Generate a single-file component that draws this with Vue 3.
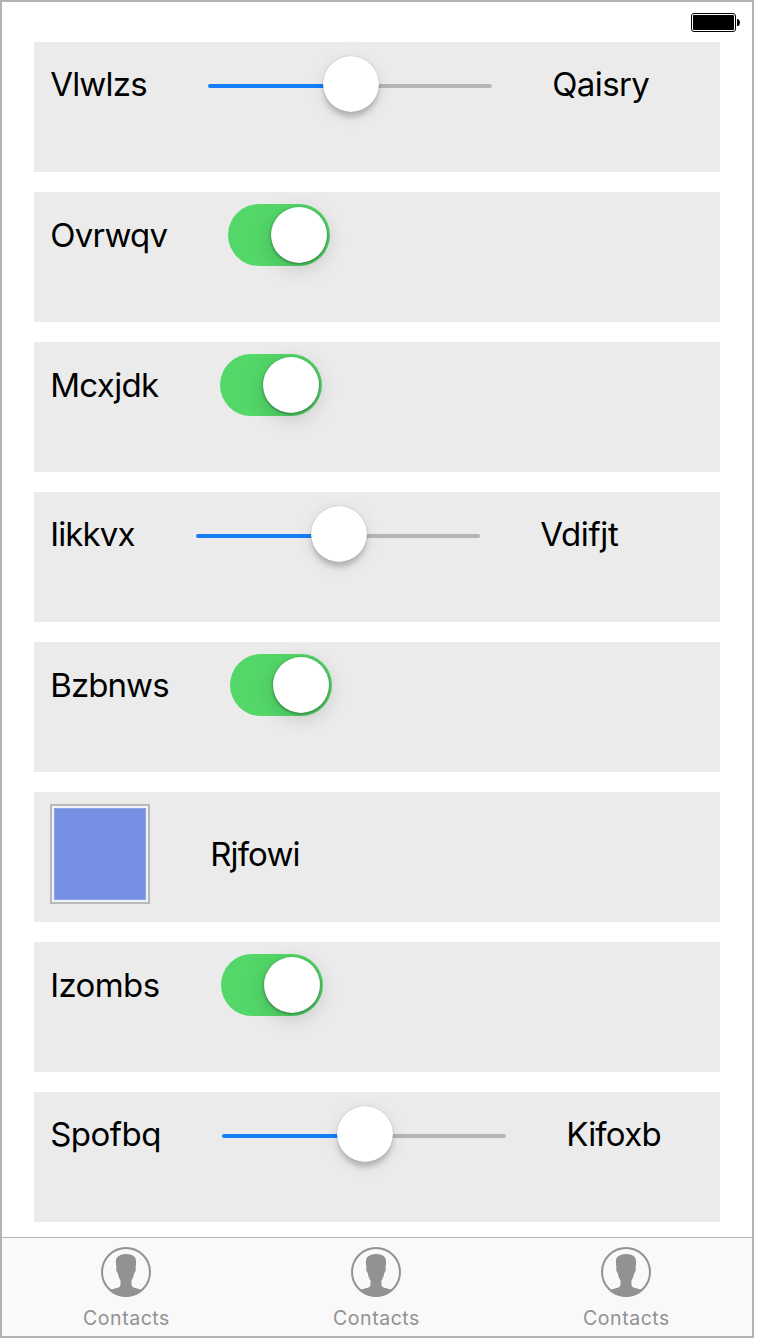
<script setup>
const rows = [
  { type: 'slider', label: 'Vlwlzs', width: 98, spacing: -0.8, end: 'Qaisry', endSpacing: -0.6 },
  { type: 'switch', label: 'Ovrwqv', width: 118, spacing: -0.75 },
  { type: 'switch', label: 'Mcxjdk', width: 110, spacing: -0.65 },
  { type: 'slider', label: 'Iikkvx', width: 86, spacing: -0.85, end: 'Vdifjt', endSpacing: -0.35 },
  { type: 'switch', label: 'Bzbnws', width: 120, spacing: -0.9 },
  { type: 'image', label: 'Rjfowi', width: 92, spacing: -0.85 },
  { type: 'switch', label: 'Izombs', width: 111, spacing: -0.6 },
  { type: 'slider', label: 'Spofbq', width: 112, spacing: -0.5, end: 'Kifoxb', endSpacing: -0.75 }
]
const tabs = ['Contacts', 'Contacts', 'Contacts']
</script>

<template>
  <div class="screen">
    <header class="status">
      <svg class="battery" width="50" height="20" viewBox="0 0 50 20">
        <rect x="0.5" y="0.5" width="44" height="18" rx="2.5" fill="#fff" stroke="#000" />
        <rect x="2" y="2" width="41" height="15" rx="1" fill="#000" />
        <path d="M46 6h1q2 1 2 3.500t-2 3.500h-1z" fill="#000" />
      </svg>
    </header>
    <main class="list">
      <section v-for="row in rows" :key="row.label" class="row">
        <div class="line">
          <div v-if="row.type === 'image'" class="swatch"><div class="fill"></div></div>
          <span class="label" :style="{ width: row.width + 'px', letterSpacing: row.spacing + 'px' }">{{ row.label }}</span>
          <div v-if="row.type === 'slider'" class="slider">
            <div class="done"></div>
            <div class="thumb"></div>
            <div class="rest"></div>
          </div>
          <div v-if="row.type === 'switch'" class="switch"><div class="knob"></div></div>
          <span v-if="row.end" class="label" :style="{ letterSpacing: row.endSpacing + 'px' }">{{ row.end }}</span>
        </div>
      </section>
    </main>
    <nav class="tabs">
      <div v-for="(tab, i) in tabs" :key="i" class="tab">
        <svg width="50" height="50" viewBox="0 0 50 50">
          <circle cx="25" cy="25" r="24" fill="none" stroke="#929292" stroke-width="2" />
          <path fill="#929292" d="M8.500 43.500C11 41.500 17 41.500 18.800 39.500C19.800 38 19.500 35.500 19.500 33.500C18 31.500 17.200 28.500 16.800 26C15.400 25 14.800 22 15.500 20.800C14.700 17 14.800 13 15.500 11C17.500 8.500 21 7 25 7C29 7 32 8 33.800 10.300C35.300 11.500 35.300 17 34.500 20.800C35.200 22 34.600 25 33.200 26C32.800 28.500 32 31.500 30.500 33.500C30.500 35.500 30.200 38 31.200 39.500C33 41.500 39 41.500 41.500 43.500A25 25 0 0 1 8.500 43.500Z" />
        </svg>
        <span class="caption">{{ tab }}</span>
      </div>
    </nav>
  </div>
</template>

<style>
body {
  background: #fff;
}
</style>

<style scoped>
.screen {
  box-sizing: border-box;
  width: 754px;
  height: 1338px;
  border: 2px solid #b2b2b2;
  background: #fff;
  display: flex;
  flex-direction: column;
  font-family: Inter, "Liberation Sans", sans-serif;
  color: #000;
}
.status {
  height: 40px;
  box-sizing: border-box;
  padding: 11px 11px 0 0;
  display: flex;
  justify-content: flex-end;
  align-items: flex-start;
}
.battery {
  display: block;
}
.list {
  flex: 1;
  padding: 0 32px;
  display: flex;
  flex-direction: column;
  gap: 20px;
}
.row {
  height: 130px;
  background: #ebebeb;
  box-sizing: border-box;
  padding: 12px 16px;
}
.line {
  display: flex;
  align-items: center;
  gap: 60px;
}
.label {
  font-size: 33px;
  line-height: 40px;
  white-space: nowrap;
  flex: none;
  text-indent: 0.2px;
}
.slider {
  width: 284px;
  height: 60px;
  flex: none;
  display: flex;
  align-items: center;
}
.done,
.rest {
  height: 4px;
  margin-top: 4px;
}
.done {
  width: 117px;
  background: #157efb;
  border-radius: 2px 0 0 2px;
  margin-right: -2px;
}
.rest {
  flex: 1;
  background: #b5b5b5;
  border-radius: 0 2px 2px 0;
  margin-left: -2px;
}
.thumb {
  width: 56px;
  height: 56px;
  border-radius: 50%;
  background: #fff;
  z-index: 1;
  box-shadow: 0 0 1px rgba(0, 0, 0, 0.35), 0 6px 5px -1px rgba(0, 0, 0, 0.18), 0 4px 16px rgba(0, 0, 0, 0.1);
}
.switch {
  width: 102px;
  height: 62px;
  box-sizing: border-box;
  padding: 3px;
  border-radius: 31px;
  background: #53d769;
  display: flex;
  justify-content: flex-end;
}
.knob {
  width: 56px;
  height: 56px;
  border-radius: 50%;
  background: #fff;
  box-shadow: 0 1px 3px rgba(0, 0, 0, 0.42), 0 5px 20px rgba(0, 0, 0, 0.17);
}
.swatch {
  width: 100px;
  height: 100px;
  box-sizing: border-box;
  border: 2px solid #b9b9b9;
  background: #f0f2fa;
  padding: 2px;
}
.fill {
  height: 100%;
  box-sizing: border-box;
  background: #758fe2;
  border: 1px solid #90a5e8;
}
.tabs {
  height: 98px;
  box-sizing: content-box;
  border-top: 1px solid #b2b2b2;
  background: #f9f9f9;
  display: flex;
}
.tab {
  width: 250px;
  flex: none;
  box-sizing: border-box;
  padding: 9px 2px 0 0;
  display: flex;
  flex-direction: column;
  align-items: center;
}
.tab svg {
  display: block;
}
.caption {
  margin-top: 9px;
  padding-left: 1px;
  font-size: 19.5px;
  line-height: 24px;
  letter-spacing: 0.55px;
  color: #929292;
}
</style>
